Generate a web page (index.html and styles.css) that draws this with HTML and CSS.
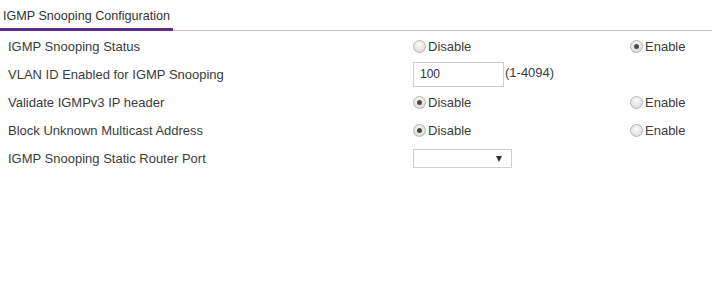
FILE: index.html
```html
<!DOCTYPE html>
<html>
<head>
<meta charset="utf-8">
<link rel="stylesheet" href="styles.css">
</head>
<body>
<div class="page">
  <div class="tabbar">
    <div class="tab">IGMP Snooping Configuration</div>
  </div>
  <div class="form">
    <div class="row">
      <div class="label">IGMP Snooping Status</div>
      <div class="col2"><span class="radio"></span>Disable</div>
      <div class="col3"><span class="radio on"></span>Enable</div>
    </div>
    <div class="row">
      <div class="label">VLAN ID Enabled for IGMP Snooping</div>
      <div class="col2"><span class="input">100</span><span class="range">(1-4094)</span></div>
      <div class="col3"></div>
    </div>
    <div class="row">
      <div class="label">Validate IGMPv3 IP header</div>
      <div class="col2"><span class="radio on"></span>Disable</div>
      <div class="col3"><span class="radio"></span>Enable</div>
    </div>
    <div class="row">
      <div class="label">Block Unknown Multicast Address</div>
      <div class="col2"><span class="radio on"></span>Disable</div>
      <div class="col3"><span class="radio"></span>Enable</div>
    </div>
    <div class="row">
      <div class="label">IGMP Snooping Static Router Port</div>
      <div class="col2"><span class="select"><span class="arrow"></span></span></div>
      <div class="col3"></div>
    </div>
  </div>
</div>
</body>
</html>
```
FILE: styles.css
```css
html, body {
  margin: 0;
  padding: 0;
  background: #ffffff;
}
body {
  font-family: "Liberation Sans", Arial, sans-serif;
  font-size: 13px;
  color: #3c3c3c;
}
.page {
  width: 720px;
}
.tabbar {
  margin-right: 8px;
  border-bottom: 1px solid #cdb8da;
  height: 30px;
  display: flex;
  align-items: flex-end;
}
.tab {
  width: 173px;
  padding-left: 3px;
  height: 28px;
  line-height: 27px;
  box-sizing: border-box;
  border-bottom: 3px solid #5f2b87;
  margin-bottom: -1px;
  color: #333;
  font-size: 12.6px;
  white-space: nowrap;
}
.form {
  padding-top: 1px;
}
.row {
  display: flex;
  align-items: center;
  height: 28px;
}
.label {
  padding-left: 8px;
  box-sizing: border-box;
  width: 413px;
}
.col2 {
  width: 217px;
  display: flex;
  align-items: center;
}
.col3 {
  display: flex;
  align-items: center;
}
.radio {
  width: 11px;
  height: 11px;
  border: 1px solid #b5b5b5;
  border-radius: 50%;
  background: radial-gradient(circle at 50% 35%, #fafafa 0%, #e4e4e4 60%, #d2d2d2 100%);
  margin-right: 2px;
  position: relative;
  flex: none;
}
.radio.on::after {
  content: "";
  position: absolute;
  left: 3px;
  top: 3px;
  width: 5px;
  height: 5px;
  border-radius: 50%;
  background: #4a4a4a;
}
.input {
  width: 91px;
  height: 25px;
  box-sizing: border-box;
  border: 1px solid #d0d0d0;
  padding-left: 6px;
  line-height: 23px;
  font-size: 12px;
  color: #333;
  margin-top: 1px;
}
.range {
  margin-left: 1px;
  margin-top: -4px;
}
.select {
  width: 99px;
  height: 19px;
  box-sizing: border-box;
  border: 1px solid #cfcfcf;
  position: relative;
  display: block;
}
.arrow {
  position: absolute;
  right: 9px;
  top: 6px;
  width: 0;
  height: 0;
  border-left: 3px solid transparent;
  border-right: 3px solid transparent;
  border-top: 6px solid #333;
}
```
